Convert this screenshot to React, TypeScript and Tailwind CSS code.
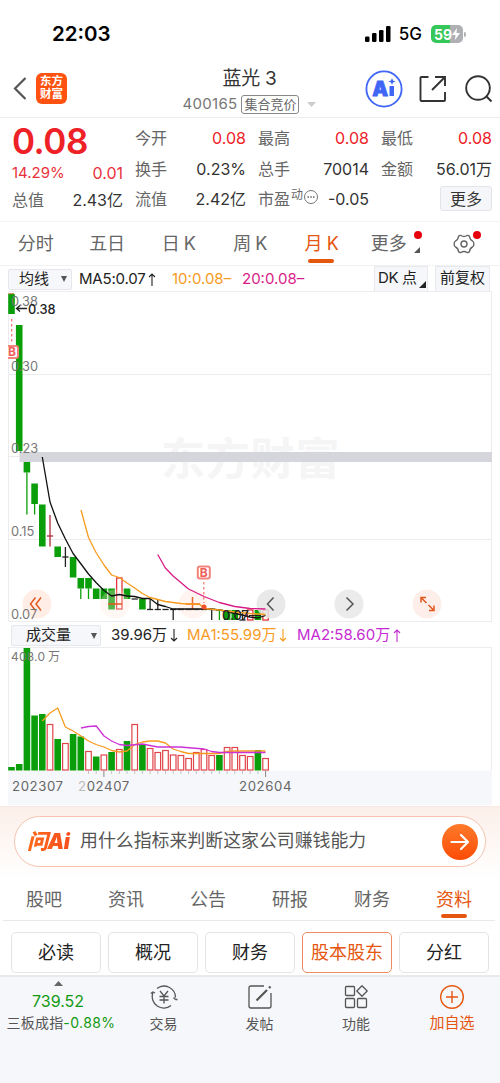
import React from "react";
import clsx from "clsx";

const STEP = 7.7;
const cx = (i: number) => 11.5 + i * STEP;

type Candle = { kind: "up" | "down" | "flat" | "flatUp"; top: number; bottom: number; high?: number; low?: number };

// Monthly candles, y is in chart coordinates
const candles: Candle[] = [
    { kind: "down", top: 294, bottom: 314 },
    { kind: "down", top: 325, bottom: 451 },
    { kind: "down", top: 462, bottom: 472.5, low: 514.5 },
    { kind: "down", top: 483.5, bottom: 504, low: 514.5 },
    { kind: "down", top: 504.5, bottom: 546.5 },
    { kind: "flatUp", top: 536, bottom: 536, high: 515, low: 546.5 },
    { kind: "down", top: 546.5, bottom: 557 },
    { kind: "flat", top: 557, bottom: 557, high: 547, low: 567 },
    { kind: "down", top: 557, bottom: 577.5 },
    { kind: "down", top: 578, bottom: 588.5, low: 599 },
    { kind: "down", top: 578, bottom: 588.5, low: 599 },
    { kind: "down", top: 588.5, bottom: 599 },
    { kind: "down", top: 588.5, bottom: 599 },
    { kind: "down", top: 588.5, bottom: 609.5 },
    { kind: "up", top: 578, bottom: 609 },
    { kind: "down", top: 588.5, bottom: 599 },
    { kind: "flat", top: 599, bottom: 599 },
    { kind: "down", top: 599, bottom: 609.5 },
    { kind: "flat", top: 609.5, bottom: 609.5, high: 599 },
    { kind: "flat", top: 609.5, bottom: 609.5, high: 599 },
    { kind: "flat", top: 609.5, bottom: 609.5 },
    { kind: "flat", top: 609.5, bottom: 609.5, low: 620 },
    { kind: "flat", top: 609.5, bottom: 609.5 },
    { kind: "flat", top: 609.5, bottom: 609.5 },
    { kind: "flat", top: 609.5, bottom: 609.5 },
    { kind: "flat", top: 609.5, bottom: 609.5 },
    { kind: "flat", top: 609.5, bottom: 609.5, low: 620 },
    { kind: "down", top: 609.5, bottom: 611, low: 620 },
    { kind: "down", top: 610, bottom: 620 },
    { kind: "down", top: 610, bottom: 620 },
    { kind: "flat", top: 620, bottom: 620, high: 610 },
    { kind: "up", top: 610, bottom: 620 },
    { kind: "down", top: 610, bottom: 620 },
    { kind: "up", top: 610, bottom: 620 },
];

const volumes: [number, boolean][] = [
    [767, false], [764, false], [648, false], [715.5, false], [714, false], [724.5, true],
    [739, false], [743.5, true], [734, false], [736.5, false], [751.5, true], [756.5, false],
    [755, true], [752, false], [749.5, true], [741, false], [724.5, true], [744, false],
    [748.5, true], [752.5, true], [750.5, true], [755, true], [755.5, true], [758.5, true],
    [752.5, true], [749.5, true], [755.5, true], [755, false], [747.5, true], [747.5, true],
    [755.5, true], [756.5, true], [750, false], [758.5, true],
];

const quotes = [
    [{ label: "今开", value: "0.08", red: true }, { label: "换手", value: "0.23%" }, { label: "流值", value: "2.42亿" }],
    [{ label: "最高", value: "0.08", red: true }, { label: "总手", value: "70014" }, { label: "市盈", value: "-0.05", pe: true }],
    [{ label: "最低", value: "0.08", red: true }, { label: "金额", value: "56.01万" }],
];

const BuyMark = ({ x, y }: { x: number; y: number }) => (
    <g>
        <rect x={x - 6} y={y - 6} width="12" height="12" rx="2" fill="#fff" stroke="#f4837c" strokeWidth="2" />
        <text x={x} y={y + 4.3} textAnchor="middle" fontSize="12" fontWeight="700" fill="#f0605a">B</text>
    </g>
);

const PriceChart = () => (
    <svg className="block h-[331px] w-full" viewBox="0 291 500 331">
        <g stroke="#ececee" strokeWidth="1">
            <path d="M8 291.5H492M8 374.5H492M8 539.5H492M8 621.5H492M8.5 291V622M491.5 291V622" fill="none" />
        </g>
        <text x="161" y="474.5" fontSize="44" fontWeight="700" fill="#f5f5f6" letterSpacing=".8">东方财富</text>
        <rect x="19.5" y="452" width="472.5" height="10" fill="#d4d6dc" />
        <path d="M8 456.5H19" stroke="#ececee" />

        {/* Candles */}
        {candles.map((c, i) => {
            const color = c.kind === "down" ? "#0a9f0a" : c.kind === "up" ? "#e0353b" : c.kind === "flatUp" ? "#b02a3c" : "#222";
            const x = cx(i);
            return (
                <g key={i} stroke={color} strokeWidth="1.3" fill="none">
                    {c.high && <path d={`M${x} ${c.high}V${c.top}`} />}
                    {c.low && <path d={`M${x} ${c.bottom}V${c.low}`} />}
                    {c.kind === "down" && <rect x={x - 3.3} y={c.top} width="6.6" height={c.bottom - c.top} fill={color} stroke="none" />}
                    {c.kind === "up" && <rect x={x - 2.7} y={c.top} width="5.4" height={c.bottom - c.top} />}
                    {(c.kind === "flat" || c.kind === "flatUp") && <path d={`M${x - 3.1} ${c.top}H${x + 3.1}`} />}
                </g>
            );
        })}
        <path d="M8.5 293.8H14" stroke="#b5651d" strokeWidth="1" />

        {/* Round tool buttons behind the lines */}
        <circle cx="37" cy="604" r="14.5" fill="#ffe9e0" fillOpacity=".8" />
        <circle cx="115" cy="604" r="14.5" fill="#ffe3d8" fillOpacity=".3" />
        <circle cx="193" cy="604" r="14.5" fill="#ffe3d8" fillOpacity=".4" />
        <circle cx="271" cy="604" r="14.5" fill="#e5e5e6" fillOpacity=".85" />
        <circle cx="349" cy="604" r="14.5" fill="#ebebec" />
        <circle cx="427" cy="604" r="14.5" fill="#fdeeea" />
        <g fill="none" strokeWidth="1.5">
            <path d="M35.5 597.5L30.5 604L35.5 610.5M41 597.5L36 604L41 610.5" stroke="#e2591f" />
            <path d="M108 604H122" stroke="#e2591f" />
            <path d="M186 604H200M192.5 597V610" stroke="#e8682d" />
            <path d="M273.5 597.5L267.5 604L273.5 610.5M346.5 597.5L353 604L346.5 610.5" stroke="#555" />
            <path d="M421 602.5V597.5H426M421 597.5L426.5 603M434 605.5V610.5H429M434 610.5L428.5 605" stroke="#e2591f" />
        </g>

        {/* Moving averages */}
        <g fill="none" strokeWidth="1.3" strokeLinejoin="round">
            <path stroke="#111" d="M42.3 457L50 502L57.7 523L65.4 539L73.1 553.5L81 564L88.5 574L96 582.5L104 590.5L111.6 596L119.3 594.5L127 596L134.7 596.5L142.4 598.5L150 598.5L157.7 604.5L165.4 606.5L173.1 609H211.6L219.3 610L227 611.5L234.8 613.5L242.5 615L250 617L257.8 618L265.5 615.5" />
            <path stroke="#f79b1e" d="M81 510L88.5 537.5L96 552.5L104 565L111.6 575L119.3 577.5L127 583L134.7 588L142.4 593.5L150 597.5L157.7 599.5L165.4 601.5L180.8 603.5L200 604.5L204 608.5L219.3 610L234.8 612L250 613.5L265.5 614.5" />
            <path stroke="#d81b87" d="M157.7 554.5L165.4 568L173.1 576L188.5 589L204 596.5L219.3 602.5L234.8 606.5L250 608.5L265.5 609" />
        </g>
        <path d="M11.7 319V342M203.8 582V603" stroke="#f0736c" strokeWidth="1.2" strokeDasharray="2.5 2.5" />
        <circle cx="204" cy="607" r="2.5" fill="#f0502a" />
        <BuyMark x={12} y={352} />
        <rect x="0" y="340" width="8" height="24" fill="#fff" />
        <BuyMark x={203.8} y={572.5} />

        {/* Scale and extremes */}
        <g fontSize="12.8" fill="#777">
            <text x="11" y="305.5">0.38</text>
            <text x="11" y="370.5">0.30</text>
            <text x="11" y="453">0.23</text>
            <text x="11" y="535.5">0.15</text>
            <text x="11" y="618.5">0.07</text>
        </g>
        <g fontSize="12.8" fontWeight="500" fill="#222">
            <path d="M16.5 308.5H27M20 305.5L16.5 308.5L20 311.5" stroke="#222" fill="none" strokeWidth="1.3" />
            <text x="28" y="313.5">0.38</text>
            <text x="222" y="620">0.07</text>
            <path d="M249 615.5H261" stroke="#222" />
        </g>
    </svg>
);

const VolumeChart = () => (
    <svg className="block h-[158px] w-full" viewBox="0 647 500 158">
        <path d="M8 647.5H492M8.5 647V770M491.5 647V770" fill="none" stroke="#ececee" />
        <rect x="8" y="770.5" width="484" height="34.5" fill="#f6f7fa" />
        {volumes.map(([top, up], i) =>
            up ? (
                <rect key={i} x={cx(i) - 2.8} y={top} width="5.6" height={770 - top} fill="#fff" stroke="#e0454b" strokeWidth="1.2" />
            ) : (
                <rect key={i} x={cx(i) - 3.3} y={top} width="6.6" height={770.5 - top} fill="#0a9f0a" />
            )
        )}
        {volumes.map((_, i) =>
            i >= 10 ? <path key={i} d={`M${cx(i)} 771V${i === 12 || i === 33 ? 777 : 774}`} stroke={i === 12 || i === 33 ? "#888" : "#c4c4c8"} /> : null
        )}
        <g fill="none" strokeWidth="1.3" strokeLinejoin="round">
            <path stroke="#f79b1e" d="M42.3 721L50 713L57.7 708L65.4 727L73.1 731L81 736L88.5 741L96 744.5L104 747L111.6 750.5L119.3 752L127 751L134.7 744.5L142.4 742L150 741L157.7 741L165.4 743L173.1 749L180.8 751.5L188.5 753.5H219L227 751.5L234.8 751H265.5" />
            <path stroke="#cc33d6" d="M81 728L88.5 726.5L96.3 726L104 736L111.6 741L119.3 744.5L127 745.5L142.4 744L157.7 747H180L204 749L211.6 751.5L219.3 752.5H265.5" />
        </g>
        <text x="11" y="660.5" fontSize="12" fill="#777" letterSpacing=".2">408.0</text>
        <text x="48" y="660.5" fontSize="12" fill="#777">万</text>
        <g fontSize="13.2" fill="#666" letterSpacing=".6">
            <text x="12" y="791">202307</text>
            <text x="78" y="791"><tspan fill="#bbb">2</tspan>02407</text>
            <text x="239" y="791">202604</text>
        </g>
    </svg>
);

const StatusBar = () => (
    <div className="flex h-[60px] items-center pt-2 pr-[34px] pl-[52px] text-black">
        <span className="text-[20.5px] font-semibold">22:03</span>
        <div className="ml-auto flex items-center">
            <svg width="26" height="16" viewBox="0 0 26 16">
                <rect x="0" y="10.5" width="4.5" height="5.5" rx="1.2" />
                <rect x="7" y="7" width="4.5" height="9" rx="1.2" />
                <rect x="14" y="4" width="4.5" height="12" rx="1.2" />
                <rect x="21" y="0" width="4.5" height="16" rx="1.2" />
            </svg>
            <span className="mt-px ml-2 text-[17px] font-medium">5G</span>
            <div className="ml-[9px] flex h-[18px] w-8 items-center justify-center rounded-[5px] bg-[linear-gradient(90deg,#35c759_60%,#aeb0b3_60%)] text-[14px] font-bold text-white">
                59
                <svg width="8" height="12" viewBox="0 0 8 12"><path d="M5 0L0 7H3.5L3 12L8 5H4.5Z" fill="#fff" /></svg>
            </div>
            <div className="ml-px h-[5px] w-[2px] rounded-r bg-[#aeb0b3]" />
        </div>
    </div>
);

const Header = () => (
    <header className="flex h-[58px] items-center border-b border-[#ececec] pr-[7px] pl-[13px]">
        <svg width="14" height="23" viewBox="0 0 14 23" fill="none" stroke="#555" strokeWidth="2.2"><path d="M12.5 1L2 11.5L12.5 22" /></svg>
        <div className="ml-[9px] h-[31px] w-[31px] rounded-md bg-[#ff5210] pt-[2px] text-center text-[11.5px] leading-[13px] font-bold text-white">
            东方<br />财富
        </div>
        <div className="ml-[115px] flex w-[135px] flex-col items-center pt-[4px]">
            <div className="text-[19px] leading-[26px] tracking-[-0.3px] text-[#333]">蓝光 3</div>
            <div className="mt-[2px] flex h-[22px] items-center text-[15px] whitespace-nowrap text-[#777]">
                <span className="tracking-[0.3px]">400165</span>
                <span className="ml-1 flex h-[19px] items-center rounded-[3px] border border-[#888] px-[2px] text-[13px] text-[#666]">集合竞价</span>
                <svg className="ml-2" width="9" height="5" viewBox="0 0 9 5"><path d="M0 0H9L4.5 5Z" fill="#ccc" /></svg>
            </div>
        </div>
        <div className="ml-auto flex items-center">
            <svg width="38" height="38" viewBox="0 0 38 38">
                <circle cx="19" cy="19" r="17.6" fill="#fff" stroke="#3f66f5" strokeWidth="1.8" />
                <text x="7.2" y="26" fontSize="20" fontWeight="900" fill="#3f66f5" stroke="#3f66f5" strokeWidth=".8">A</text>
                <path d="M24.5 16H29V26H24.5Z" fill="#3f66f5" />
                <path d="M27 8L28 10.5L30.5 11.5L28 12.5L27 15L26 12.5L23.5 11.5L26 10.5Z" fill="#3f66f5" />
            </svg>
            <svg className="ml-4" width="28" height="28" viewBox="0 0 28 28" fill="none" stroke="#333" strokeWidth="1.9">
                <path d="M9.5 2H2.5Q1.5 2 1.5 3V25Q1.5 26 2.5 26H25Q26 26 26 25V17M16 2H26V11M26 2L13 15" />
            </svg>
            <svg className="ml-4" width="30" height="30" viewBox="0 0 30 30" fill="none" stroke="#333" strokeWidth="1.9">
                <circle cx="15" cy="14" r="11.8" />
                <path d="M23 22L28.5 27.5" />
            </svg>
        </div>
    </header>
);

const QuotePanel = () => (
    <section className="grid h-[104px] grid-cols-[111px_111px_111px_111px] gap-x-3 border-b border-[#f4f4f4] pt-[5px] pl-3 text-[16px] text-[#333]">
        <div>
            <div className="h-[36px] text-[35px] leading-[36px] font-semibold tracking-[-0.5px] text-[#ee2127]">0.08</div>
            <div className="flex h-[25px] items-center justify-between pt-[3px] text-[15px] text-[#e8323a]">
                <span>14.29%</span>
                <span className="text-[16px]">0.01</span>
            </div>
            <div className="flex h-[31px] items-center justify-between">
                <span className="text-[#666]">总值</span>
                <span>2.43亿</span>
            </div>
        </div>
        {quotes.map((col, i) => (
            <div key={i}>
                {col.map((q) => (
                    <div key={q.label} className="flex h-[30.6px] items-center justify-between whitespace-nowrap">
                        <span className="flex items-center text-[#666]">
                            {q.label}
                            {"pe" in q && (
                                <>
                                    <span className="mb-2 ml-px text-[12px] leading-none">动</span>
                                    <svg className="mb-1" width="16" height="16" viewBox="0 0 16 16">
                                        <circle cx="8" cy="8" r="6.5" fill="none" stroke="#777" />
                                        <path d="M4.5 8H6M7.3 8H8.8M10 8H11.5" stroke="#666" strokeWidth="1.4" />
                                    </svg>
                                </>
                            )}
                        </span>
                        <span className={clsx("red" in q && "text-[#ee2127]")}>{q.value}</span>
                    </div>
                ))}
                {i === 2 && (
                    <button className="mt-[2px] ml-auto flex h-[25px] w-[52px] items-center justify-center rounded-[3px] border border-[#e3e4e8] bg-[#f5f6f9]">更多</button>
                )}
            </div>
        ))}
    </section>
);

const periods = ["分时", "五日", "日 K", "周 K", "月 K", "更多"];

const PeriodTabs = () => (
    <nav className="grid h-[44px] grid-cols-7 border-b border-[#f2f2f2] text-[18px] text-[#666]">
        {periods.map((p) => (
            <div
                key={p}
                className={clsx(
                    "relative flex items-center justify-center",
                    p === "月 K" && "text-[#e5560f]",
                    p === "更多" && "pr-2",
                    p.endsWith("K") && "tracking-[-0.5px]"
                )}
            >
                {p}
                {p === "月 K" && <span className="absolute bottom-[2px] h-1 w-[26px] rounded-full bg-[#e5560f]" />}
                {p === "更多" && (
                    <>
                        <span className="absolute top-[9px] right-[7px] h-2 w-2 rounded-full bg-red-600" />
                        <svg className="absolute right-[9px] bottom-[12px]" width="6" height="6" viewBox="0 0 6 6"><path d="M6 0V6H0Z" fill="#555" /></svg>
                    </>
                )}
            </div>
        ))}
        <div className="relative flex items-center justify-center">
            <svg width="22" height="22" viewBox="0 0 22 22" fill="none" stroke="#666" strokeWidth="1.4" strokeLinejoin="round">
                <path d="M8 2.5Q11 4.5 14 2.5Q15.5 2 16.5 3.5Q17 7 19.5 8Q21 8.8 20.8 11Q21 13.2 19.5 14Q17 15 16.5 18.5Q15.5 20 14 19.5Q11 17.5 8 19.5Q6.5 20 5.5 18.5Q5 15 2.5 14Q1 13.2 1.2 11Q1 8.8 2.5 8Q5 7 5.5 3.5Q6.5 2 8 2.5Z" />
                <circle cx="11" cy="11" r="3" />
            </svg>
            <span className="absolute top-[9px] right-[19px] h-2 w-2 rounded-full bg-red-600" />
        </div>
    </nav>
);

const Arrow = ({ up }: { up?: boolean }) => (
    <svg className="ml-[3px] inline-block" width="8" height="13" viewBox="0 0 8 13" fill="none" stroke="currentColor" strokeWidth="1.1">
        <path d={up ? "M4 13V1M1 4L4 1L7 4" : "M4 0V12M1 9L4 12L7 9"} />
    </svg>
);

const AverageRow = () => (
    <div className="flex h-[25px] items-center pr-[10px] pl-2 text-[15px] whitespace-nowrap text-[#222]">
        <div className="mt-px flex h-[21px] w-16 items-center justify-between rounded-[2px] border border-[#e6e7ea] bg-[#f6f7fa] pr-1 pl-[10px]">
            均线
            <svg width="6" height="6" viewBox="0 0 6 6"><path d="M0 0H6L3 6Z" fill="#555" /></svg>
        </div>
        <span className="mt-px ml-[7px] flex w-[93px] items-center tracking-[-0.2px]">MA5:0.07<Arrow up /></span>
        <span className="mt-px w-[70px] text-[#f79b1e]">10:0.08–</span>
        <span className="mt-px text-[#d81b87]">20:0.08–</span>
        <div className="ml-auto flex h-[26px] w-[54px] items-center border border-[#e8e9ec] bg-[#f6f7fa] pl-[3px] tracking-[-0.4px]">
            DK 点
            <svg className="mt-3 ml-[2px]" width="7" height="7" viewBox="0 0 7 7"><path d="M7 0V7H0Z" fill="#222" /></svg>
        </div>
        <div className="ml-[7px] flex h-[26px] w-[55px] items-center justify-center border border-[#e8e9ec] bg-[#f6f7fa]">前复权</div>
    </div>
);

const VolumeRow = () => (
    <div className="flex h-[25px] items-center pt-[2px] pl-[11px] text-[15px] whitespace-nowrap text-[#222]">
        <div className="flex h-[21px] w-[90px] items-center justify-between rounded-[2px] border border-[#e6e7ea] bg-[#f6f7fa] pr-[3px] pl-[14px]">
            成交量
            <svg width="6" height="6" viewBox="0 0 6 6"><path d="M0 0H6L3 6Z" fill="#555" /></svg>
        </div>
        <span className="ml-[10px] flex w-[76px] items-center">39.96万<Arrow /></span>
        <span className="flex w-[110px] items-center text-[#f79b1e]">MA1:55.99万<Arrow /></span>
        <span className="flex items-center text-[#c42bd0]">MA2:58.60万<Arrow up /></span>
    </div>
);

const AskBar = () => (
    <div className="mt-px h-[73px] border-t border-[#f6e9e4] bg-linear-to-b from-[#fcefe9] to-white px-[14px] pt-[9px]">
        <div className="flex h-[51px] items-center rounded-full border border-[#f5c3ae] bg-white pr-[7px] pl-3">
            <span className="w-[53px] bg-linear-to-r from-[#ff6a1a] to-[#f4481e] bg-clip-text text-[21px] font-black tracking-tight text-transparent italic">问Ai</span>
            <span className="text-[17.9px] text-[#555]">用什么指标来判断这家公司赚钱能力</span>
            <svg className="ml-auto" width="36" height="36" viewBox="0 0 36 36">
                <defs>
                    <linearGradient id="go" x1="0" y1="0" x2="0" y2="1">
                        <stop stopColor="#ff7a2b" />
                        <stop offset="1" stopColor="#fb4c06" />
                    </linearGradient>
                </defs>
                <circle cx="18" cy="18" r="18" fill="url(#go)" />
                <path d="M9.5 18H26M19 11L26 18L19 25" fill="none" stroke="#fff" strokeWidth="2.2" strokeLinecap="round" strokeLinejoin="round" />
            </svg>
        </div>
    </div>
);

const sections = ["股吧", "资讯", "公告", "研报", "财务", "资料"];
const chips = ["必读", "概况", "财务", "股本股东", "分红"];

const InfoTabs = () => (
    <>
        <nav className="mr-[5px] ml-[3px] grid h-[42px] grid-cols-6 border-b border-[#e9e9ea] text-[18px] text-[#666]">
            {sections.map((s) => (
                <div key={s} className={clsx("relative flex items-center justify-center pb-px", s === "资料" && "text-[#e5560f]")}>
                    {s}
                    {s === "资料" && <span className="absolute bottom-[2px] h-1 w-[26px] rounded-full bg-[#e5560f]" />}
                </div>
            ))}
        </nav>
        <div className="flex h-[54px] gap-[7px] px-[11px] pt-[11px] text-[18px] text-[#222]">
            {chips.map((c) => (
                <div
                    key={c}
                    className={clsx(
                        "flex h-[41px] flex-1 items-center justify-center rounded-[5px] border whitespace-nowrap",
                        c === "股本股东" ? "border-[#ee8a62] text-[#e5560f]" : "border-[#e4e4e6]"
                    )}
                >
                    {c}
                </div>
            ))}
        </div>
    </>
);

const BottomNav = () => (
    <footer className="grid h-[108px] grid-cols-[116px_95px_97px_96px_96px] border-t-2 border-[#e9eaed] bg-[#f6f7fa] text-[14px] text-[#555]">
        <div className="flex flex-col items-center pt-[4px] whitespace-nowrap">
            <svg width="9" height="5" viewBox="0 0 9 5"><path d="M0 5H9L4.5 0Z" fill="#666" /></svg>
            <span className="mt-[3px] text-[16px] leading-6 text-[#129912]">739.52</span>
            <span className="pl-[6px] leading-5 tracking-[0.2px]">三板成指<span className="tracking-[0.4px] text-[#129912]">-0.88%</span></span>
        </div>
        <div className="flex flex-col items-center gap-[3px] pt-[7px]">
            <svg width="28" height="26" viewBox="0 0 28 26" fill="none" stroke="#555" strokeWidth="1.3">
                <path d="M7 4.5A11.5 11.5 0 0 1 25.5 13.5M25.5 15.5L23.5 13.5M25.5 15.5L27.5 15.5M21 21.5A11.5 11.5 0 0 1 2.8 9M.8 9.5L3 8L5 9" />
                <path d="M10 7L14 12L18 7M9.5 12.5H18.5M9.5 16H18.5M14 12V19.5" />
            </svg>
            <span>交易</span>
        </div>
        <div className="flex flex-col items-center gap-[3px] pt-[7px]">
            <svg width="26" height="26" viewBox="0 0 26 26" fill="none" stroke="#555" strokeWidth="1.3">
                <path d="M17 2H4Q2 2 2 4V22Q2 24 4 24H22Q24 24 24 22V9" />
                <path d="M9.5 16.5L20 6M22 4L23.5 2.5" strokeWidth="2.2" />
            </svg>
            <span>发帖</span>
        </div>
        <div className="flex flex-col items-center gap-[3px] pt-[7px]">
            <svg width="26" height="26" viewBox="0 0 26 26" fill="none" stroke="#555" strokeWidth="1.3" strokeLinejoin="round">
                <rect x="2.5" y="2.5" width="9" height="9" rx="1" />
                <rect x="2.5" y="14.5" width="9" height="9" rx="1" />
                <rect x="14.5" y="14.5" width="9" height="9" rx="1" />
                <path d="M19 1.8L24.2 7L19 12.2L13.8 7Z" />
            </svg>
            <span>功能</span>
        </div>
        <div className="flex flex-col items-center gap-[3px] pt-[7px] text-[#e5560f]">
            <svg width="26" height="26" viewBox="0 0 26 26" fill="none" stroke="currentColor" strokeWidth="1.4">
                <circle cx="13" cy="13" r="11.3" />
                <path d="M13 7V19M7 13H19" />
            </svg>
            <span className="text-[15px] leading-[20px]">加自选</span>
        </div>
    </footer>
);

const App = () => {
    return (
        <div className="h-[1083px] w-[500px] overflow-hidden bg-white font-['Inter','Noto_Sans_CJK_SC',sans-serif]">
            <StatusBar />
            <Header />
            <QuotePanel />
            <PeriodTabs />
            <AverageRow />
            <PriceChart />
            <VolumeRow />
            <VolumeChart />
            <AskBar />
            <InfoTabs />
            <BottomNav />
        </div>
    );
};

export default App;
